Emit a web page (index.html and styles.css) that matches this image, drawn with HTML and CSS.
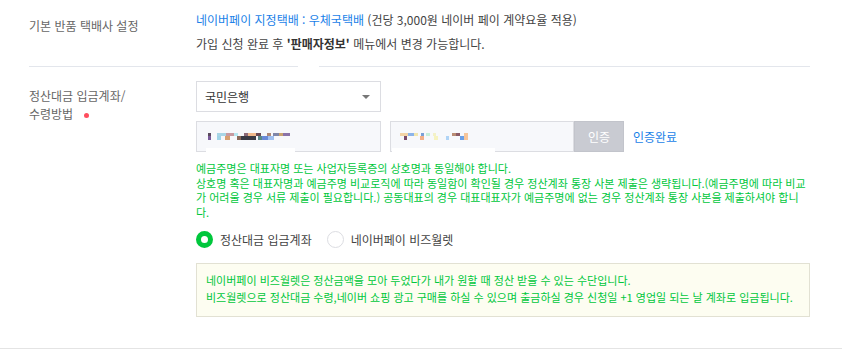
FILE: index.html
```html
<!DOCTYPE html>
<html lang="ko">
<head>
    <meta charset="UTF-8">
    <meta name="viewport" content="width=device-width, initial-scale=1.0">
    <title>판매자 정보 - 정산</title>
    <link rel="stylesheet" href="styles.css">
</head>
<body>
    <div class="form">
        <!-- 반품 택배사 -->
        <div class="row row-return">
            <div class="row-label">기본 반품 택배사 설정</div>
            <div class="row-body">
                <p class="line"><span class="accent">네이버페이 지정택배 : 우체국택배</span> (건당 3,000원 네이버 페이 계약요율 적용)</p>
                <p class="line">가입 신청 완료 후 <b>'판매자정보'</b> 메뉴에서 변경 가능합니다.</p>
            </div>
        </div>

        <!-- 정산대금 -->
        <div class="row row-account">
            <div class="row-label">정산대금 입금계좌/<br>수령방법<span class="required"></span></div>
            <div class="row-body">
                <div class="select">
                    <span>국민은행</span>
                    <span class="caret"></span>
                </div>
                <div class="account-line">
                    <div class="input masked first">
                        <div class="mosaic">
                            <span class="px" style="background:#5a4a5e;width:3px"></span>
                            <span class="px" style="background:#a9d6e6;width:9px;margin-left:6px"></span>
                            <span class="px" style="background:#c79aa0;width:8px"></span>
                            <span class="px" style="background:#b6e8f0;width:4px"></span>
                            <span class="px" style="background:#8c6a78;width:4px;margin-left:6px"></span>
                            <span class="px" style="background:#f0b88a;width:8px"></span>
                            <span class="px" style="background:#6a4a55;width:5px"></span>
                            <span class="px" style="background:#b08a78;width:4px;margin-left:6px"></span>
                            <span class="px" style="background:#7f86a8;width:6px;margin-left:2px"></span>
                            <span class="px" style="background:#caa46f;width:4px"></span>
                            <span class="px" style="background:#8a73a8;width:7px"></span>
                        </div>
                        <div class="mosaic">
                            <span class="px" style="background:#7a5a9a;width:3px"></span>
                            <span class="px" style="background:#a0d4e8;width:4px;margin-left:6px"></span>
                            <span class="px" style="background:#d8a070;width:5px;margin-left:4px"></span>
                            <span class="px" style="background:#8a6a5a;width:4px;margin-left:7px"></span>
                            <span class="px" style="background:#3a3a44;width:15px"></span>
                            <span class="px" style="background:#5a8a8a;width:4px;margin-left:2px"></span>
                            <span class="px" style="background:#6a8ad8;width:6px"></span>
                            <span class="px" style="background:#a0c0f0;width:6px"></span>
                        </div>
                    </div>
                    <div class="input masked second">
                        <div class="mosaic">
                            <span class="px" style="background:#f3d3a6;width:8px"></span>
                            <span class="px" style="background:#8cb4ea;width:6px"></span>
                            <span class="px" style="background:#f0e6b0;width:4px"></span>
                            <span class="px" style="background:#7aa0d8;width:3px;margin-left:3px"></span>
                            <span class="px" style="background:#c6efdc;width:4px;margin-left:2px"></span>
                            <span class="px" style="background:#f3f1c8;width:3px;margin-left:3px"></span>
                            <span class="px" style="background:#b98c74;width:4px;margin-left:16px"></span>
                            <span class="px" style="background:#8a5a66;width:4px"></span>
                            <span class="px" style="background:#f6c59a;width:4px;margin-left:4px"></span>
                        </div>
                        <div class="mosaic">
                            <span class="px" style="background:#7a4a6a;width:3px;margin-left:4px"></span>
                            <span class="px" style="background:#f3b08a;width:4px;margin-left:13px"></span>
                            <span class="px" style="background:#f6f3c0;width:4px;margin-left:10px"></span>
                            <span class="px" style="background:#b0d4f6;width:3px;margin-left:8px"></span>
                            <span class="px" style="background:#6aa0e8;width:4px;margin-left:11px"></span>
                            <span class="px" style="background:#f6c59a;width:4px"></span>
                        </div>
                    </div>
                    <button class="btn-verify">인증</button>
                    <span class="verified">인증완료</span>
                </div>
                <div class="notice">
                    예금주명은 대표자명 또는 사업자등록증의 상호명과 동일해야 합니다.<br>
                    상호명 혹은 대표자명과 예금주명 비교로직에 따라 동일함이 확인될 경우 정산계좌 통장 사본 제출은 생략됩니다.(예금주명에 따라 비교가 어려울 경우 서류 제출이 필요합니다.) 공동대표의 경우 대표대표자가 예금주명에 없는 경우 정산계좌 통장 사본을 제출하셔야 합니다.
                </div>
                <div class="radios">
                    <label class="radio checked"><span class="dot"></span>정산대금 입금계좌</label>
                    <label class="radio"><span class="dot"></span>네이버페이 비즈월렛</label>
                </div>
                <div class="info-box">
                    네이버페이 비즈월렛은 정산금액을 모아 두었다가 내가 원할 때 정산 받을 수 있는 수단입니다.<br>
                    비즈월렛으로 정산대금 수령,네이버 쇼핑 광고 구매를 하실 수 있으며 출금하실 경우 신청일 +1 영업일 되는 날 계좌로 입금됩니다.
                </div>
            </div>
        </div>
    </div>
</body>
</html>
```

FILE: styles.css
```css
* {
    margin: 0;
    padding: 0;
    box-sizing: border-box;
}

body {
    font-family: "Noto Sans CJK KR", "Noto Sans", sans-serif;
    font-size: 12px;
    background: #fff;
    color: #444;
    width: 842px;
    height: 352px;
    overflow: hidden;
}

.row {
    display: flex;
}

.row-label {
    width: 167px;
    flex-shrink: 0;
    color: #666;
    font-size: 12px;
    line-height: 18px;
}

.row-body {
    width: 614px;
}

/* 반품 택배사 */
.row-return {
    margin-left: 29px;
    width: 781px;
    padding: 8px 0 10px;
    border-bottom: 1px solid #e3e6ec;
    position: relative;
}

.row-return .row-label {
    padding-top: 10px;
    line-height: 16px;
}

/* 구분선 끊김 */
.row-return::after {
    content: "";
    position: absolute;
    left: 269px;
    bottom: -1px;
    width: 21px;
    height: 1px;
    background: #fff;
}

.line {
    line-height: 24px;
    color: #444;
}

.line b {
    font-weight: 700;
    color: #333;
}

.accent {
    color: #1a7fe8;
}

/* 정산대금 */
.row-account {
    padding: 14px 0 31px 29px;
    border-bottom: 1px solid #e4e4e4;
}

.row-account .row-label {
    padding-top: 6px;
}

.required {
    display: inline-block;
    width: 5px;
    height: 5px;
    border-radius: 50%;
    background: #ff4e5e;
    margin-left: 11px;
    vertical-align: middle;
}

.select {
    width: 185px;
    height: 31px;
    border: 1px solid #dcdde2;
    display: flex;
    align-items: center;
    justify-content: space-between;
    padding: 0 10px 0 8px;
    color: #333;
}

.caret {
    width: 0;
    height: 0;
    border-left: 4px solid transparent;
    border-right: 4px solid transparent;
    border-top: 4px solid #777;
}

.account-line {
    display: flex;
    align-items: center;
    margin-top: 9px;
}

.input {
    width: 185px;
    height: 31px;
    border: 1px solid #dcdde2;
    background: #f7f8fb;
    display: flex;
    flex-direction: column;
    justify-content: center;
    padding-left: 11px;
    position: relative;
}

.input.second {
    margin-left: 9px;
    width: 184px;
    padding-left: 9px;
}

.mosaic {
    display: flex;
    height: 3px;
}

.mosaic + .mosaic {
    height: 4px;
}

.px {
    display: block;
    height: 100%;
}

/* 가림 처리 흔적 */
.input::after {
    content: "";
    position: absolute;
    bottom: -1px;
    height: 4px;
    background: #fff;
}

.input.first::after {
    left: 9px;
    width: 89px;
}

.input.second::after {
    left: 1px;
    width: 103px;
}

.btn-verify {
    width: 50px;
    height: 31px;
    border: 1px solid #c2c4cb;
    background: #c9cbd2;
    color: #fff;
    font-family: inherit;
    font-size: 12px;
}

.verified {
    color: #1a7fe8;
    margin-left: 9px;
}

.notice {
    color: #00c73c;
    font-size: 11px;
    line-height: 14.5px;
    margin-top: 9px;
}

.radios {
    display: flex;
    margin-top: 12px;
}

.radio {
    display: flex;
    align-items: center;
    color: #444;
    line-height: 17px;
}

.radio + .radio {
    margin-left: 15px;
}

.dot {
    width: 17px;
    height: 17px;
    border-radius: 50%;
    border: 1px solid #dcdde2;
    margin-right: 7px;
    background: #fff;
}

.radio.checked .dot {
    border: 5px solid #00c73c;
}

.info-box {
    margin-top: 15px;
    width: 614px;
    background: #fdfdf1;
    border: 1px solid #e2e1d3;
    padding: 8px 9px 10px;
    color: #00c73c;
    font-size: 11px;
    line-height: 17px;
}
```
